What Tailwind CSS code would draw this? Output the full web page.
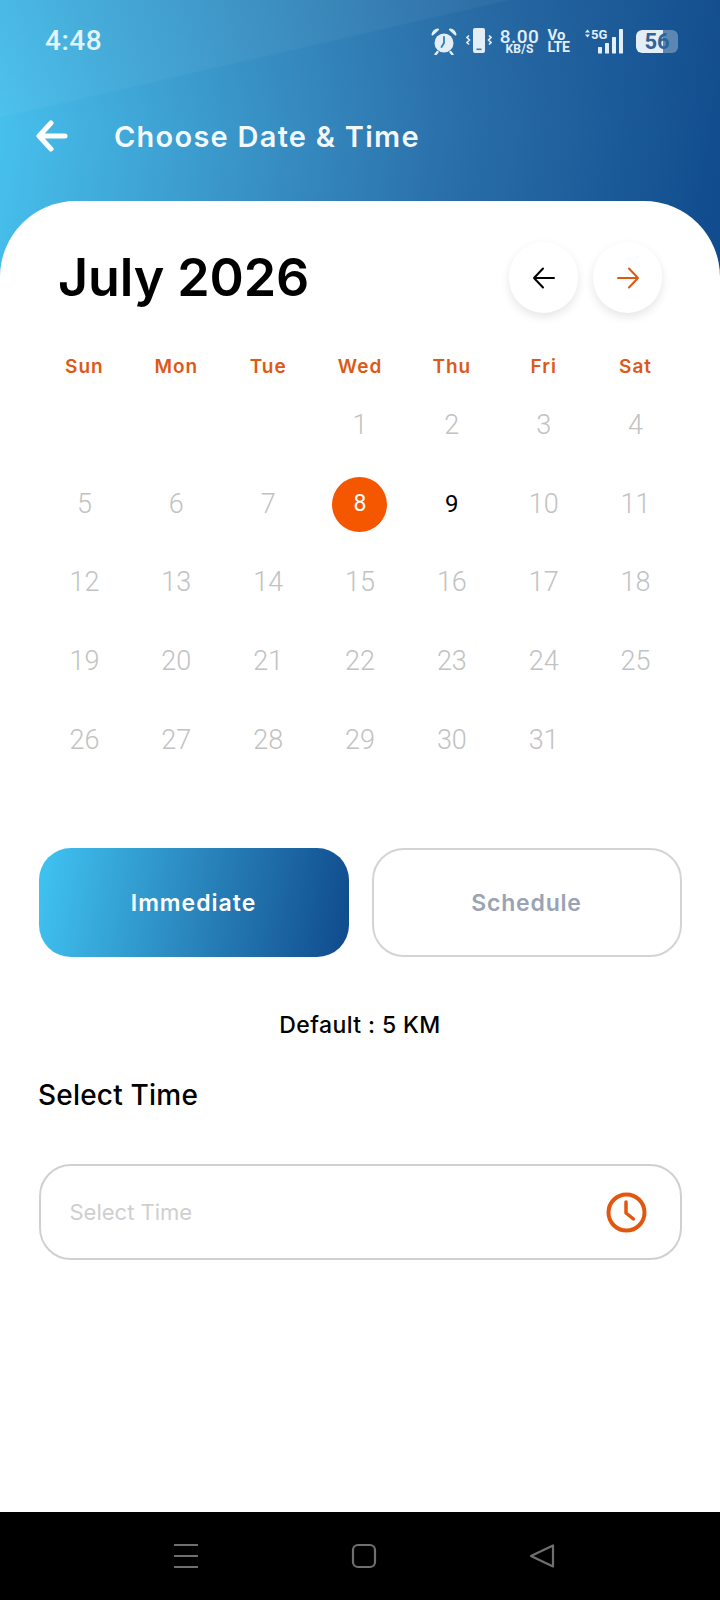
<!DOCTYPE html>
<html lang="en">
<head>
  <meta charset="UTF-8">
  <meta name="viewport" content="width=device-width, initial-scale=1.0">
  <title>Choose Date & Time</title>
  <script src="https://cdn.jsdelivr.net/npm/@tailwindcss/browser@4"></script>
</head>
<body class="bg-white font-['Inter',sans-serif]">
  <div class="w-[720px] h-[1600px] flex flex-col overflow-hidden bg-no-repeat bg-[length:100%_290px] bg-[linear-gradient(167deg,rgba(255,255,255,0.04)_0%,rgba(255,255,255,0.04)_25.500%,rgba(255,255,255,0)_26%),linear-gradient(180deg,rgba(20,60,120,0.1)_0%,rgba(20,60,120,0)_45%),linear-gradient(100deg,#48c4f0_0%,#3a96c9_33%,#2a6fa9_62%,#0f4a8c_100%)]">

    <!-- status bar -->
    <div class="h-[82px] shrink-0 flex items-center justify-between pl-[45px] pr-[42px] text-white/85">
      <span class="text-[28px] font-medium font-['Roboto',sans-serif] tracking-[0.5px]">4:48</span>
      <div class="flex items-center h-[30px]">
        <svg class="w-[26px] h-[27px]" viewBox="0 0 26 27" fill="none">
          <circle cx="13" cy="15" r="9.500" fill="#e3eef6"/>
          <path d="M13 9v6l-2.500 4" stroke="#2f7fb6" stroke-width="1.800" stroke-linecap="round" fill="none"/>
          <path d="M1.500 6.500Q2.500 2 7 1.500ZM24.500 6.500Q23.500 2 19 1.500Z" fill="#e3eef6" stroke="#e3eef6" stroke-width="2" stroke-linejoin="round"/>
          <path d="M6.500 24l-2 2.500M19.500 24l2 2.500" stroke="#e3eef6" stroke-width="2.400" stroke-linecap="round"/>
        </svg>
        <svg class="w-[26px] h-[26px] ml-[9px]" viewBox="0 0 26 26" fill="none">
          <rect x="7" y="0" width="12" height="25" rx="2" fill="#e3eef6"/>
          <rect x="10.500" y="20.500" width="5" height="1.600" fill="#2f7fb6"/>
          <path d="M3 7.500 1 9.500l2.500 2.500L1 14.500l2 2M23 7.500l2 2-2.500 2.500 2.500 2.500-2 2" stroke="#e3eef6" stroke-width="1.600"/>
        </svg>
        <div class="ml-[8px] flex flex-col items-center font-['Roboto',sans-serif] font-medium leading-none text-[#e3eef6]">
          <span class="text-[19px] tracking-[0.5px] h-[15px] leading-[15px]">8.00</span>
          <span class="text-[12px] font-bold h-[10px] leading-[10px] tracking-[0.3px]">KB/S</span>
        </div>
        <div class="ml-[8px] flex flex-col items-start font-['Roboto',sans-serif] font-bold leading-none text-[#e3eef6]">
          <span class="text-[15px] h-[13px] leading-[13px]">Vo</span>
          <span class="text-[14px] h-[11px] leading-[11px]">LTE</span>
        </div>
        <div class="relative ml-[14px] w-[44px] h-[26px] text-[#e3eef6]">
          <svg class="absolute left-0 top-0 w-[44px] h-[26px]" viewBox="0 0 44 26" fill="#e3eef6">
            <path d="M1 4.500 3.500 1.500 6 4.500zM1 6.500 3.500 9.500 6 6.500z"/>
            <rect x="14" y="19" width="4" height="6.500" rx="0.500"/>
            <rect x="21" y="15" width="4" height="10.500" rx="0.500"/>
            <rect x="28" y="9" width="4" height="16.500" rx="0.500"/>
            <rect x="35" y="1" width="4" height="24.500" rx="0.500"/>
          </svg>
          <span class="absolute left-[7px] top-[1px] text-[13px] font-bold font-['Roboto',sans-serif] leading-[11px]">5G</span>
        </div>
        <div class="relative ml-[8px] w-[42px] h-[23px] rounded-[6px] bg-white/30 overflow-hidden">
          <div class="w-[27px] h-full bg-[#e3eef6] rounded-l-[6px]"></div>
          <span class="absolute inset-0 flex items-center justify-center text-[22px] font-bold font-['Roboto',sans-serif] text-[#2d6499]">56</span>
        </div>
      </div>
    </div>

    <!-- title bar -->
    <div class="h-[119px] shrink-0 flex items-start pl-[36px]">
      <svg class="w-[32px] h-[32px] mt-[38px]" viewBox="0 0 32 32" fill="none" stroke="white" stroke-width="5" stroke-linecap="round" stroke-linejoin="round">
        <path d="M29 16H4M15 3 3 16l12 13"/>
      </svg>
      <h1 class="ml-[46px] mt-[37px] text-[29px] leading-[36px] font-semibold tracking-[1.250px] text-white/95">Choose Date &amp; Time</h1>
    </div>

    <!-- card -->
    <div class="flex-1 bg-white rounded-t-[76px] flex flex-col">
      <div class="flex items-center justify-between pl-[58px] pr-[58px] pt-[41px]">
        <h2 class="text-[52px] leading-[70px] font-semibold tracking-[-0.1px] text-black">July 2026</h2>
        <div class="flex gap-[15px]">
          <button class="w-[69px] h-[71px] rounded-full bg-white shadow-[0_4px_10px_rgba(0,0,0,0.1)] flex items-center justify-center">
            <svg class="w-[24px] h-[24px]" viewBox="0 0 24 24" fill="none" stroke="#000" stroke-width="2" stroke-linecap="round" stroke-linejoin="round"><path d="M22 12H2M11 2.500 2 12l9 9.500"/></svg>
          </button>
          <button class="w-[69px] h-[71px] rounded-full bg-white shadow-[0_4px_10px_rgba(0,0,0,0.1)] flex items-center justify-center">
            <svg class="w-[24px] h-[24px]" viewBox="0 0 24 24" fill="none" stroke="#e2570f" stroke-width="2" stroke-linecap="round" stroke-linejoin="round"><path d="M2 12h20M13 2.500l9 9.500-9 9.500"/></svg>
          </button>
        </div>
      </div>

      <!-- calendar -->
      <div class="mt-[40px] px-[38.500px] grid grid-cols-7 w-full text-center">
        <div class="h-[28px] leading-[28px] text-[19px] font-semibold tracking-[1px] text-[#dd5a16]">Sun</div>
        <div class="h-[28px] leading-[28px] text-[19px] font-semibold tracking-[1px] text-[#dd5a16]">Mon</div>
        <div class="h-[28px] leading-[28px] text-[19px] font-semibold tracking-[1px] text-[#dd5a16]">Tue</div>
        <div class="h-[28px] leading-[28px] text-[19px] font-semibold tracking-[1px] text-[#dd5a16]">Wed</div>
        <div class="h-[28px] leading-[28px] text-[19px] font-semibold tracking-[1px] text-[#dd5a16]">Thu</div>
        <div class="h-[28px] leading-[28px] text-[19px] font-semibold tracking-[1px] text-[#dd5a16]">Fri</div>
        <div class="h-[28px] leading-[28px] text-[19px] font-semibold tracking-[1px] text-[#dd5a16]">Sat</div>
      </div>
      <div class="mt-[5px] px-[38.500px] grid grid-cols-7 auto-rows-[78.700px] w-full font-['Roboto',sans-serif] font-light text-[27px] text-[#c2c2c2]">
        <div></div><div></div><div></div>
        <div class="flex items-center justify-center">1</div>
        <div class="flex items-center justify-center">2</div>
        <div class="flex items-center justify-center">3</div>
        <div class="flex items-center justify-center">4</div>
        <div class="flex items-center justify-center">5</div>
        <div class="flex items-center justify-center">6</div>
        <div class="flex items-center justify-center">7</div>
        <div class="flex items-center justify-center"><span class="w-[55px] h-[55px] rounded-full bg-[#f55600] text-white font-normal text-[23px] flex items-center justify-center">8</span></div>
        <div class="flex items-center justify-center text-black font-normal text-[24px]">9</div>
        <div class="flex items-center justify-center">10</div>
        <div class="flex items-center justify-center">11</div>
        <div class="flex items-center justify-center">12</div>
        <div class="flex items-center justify-center">13</div>
        <div class="flex items-center justify-center">14</div>
        <div class="flex items-center justify-center">15</div>
        <div class="flex items-center justify-center">16</div>
        <div class="flex items-center justify-center">17</div>
        <div class="flex items-center justify-center">18</div>
        <div class="flex items-center justify-center">19</div>
        <div class="flex items-center justify-center">20</div>
        <div class="flex items-center justify-center">21</div>
        <div class="flex items-center justify-center">22</div>
        <div class="flex items-center justify-center">23</div>
        <div class="flex items-center justify-center">24</div>
        <div class="flex items-center justify-center">25</div>
        <div class="flex items-center justify-center">26</div>
        <div class="flex items-center justify-center">27</div>
        <div class="flex items-center justify-center">28</div>
        <div class="flex items-center justify-center">29</div>
        <div class="flex items-center justify-center">30</div>
        <div class="flex items-center justify-center">31</div>
      </div>

      <!-- mode buttons -->
      <div class="mt-[69px] px-[38.500px] flex gap-[23px]">
        <button class="w-[310px] h-[109px] rounded-[32px] bg-[linear-gradient(100deg,#40c4f2_0%,#2a86bd_50%,#0f4a8c_100%)] text-white text-[23px] font-semibold tracking-[1px]">Immediate</button>
        <button class="w-[310px] h-[109px] rounded-[32px] border-2 border-[#d4d4d4] text-[#9aa3b5] text-[23px] font-semibold tracking-[0.8px]">Schedule</button>
      </div>

      <p class="mt-[52px] text-center text-[23px] leading-[32px] font-medium tracking-[0.4px] text-black">Default : 5 KM</p>

      <h3 class="mt-[34px] pl-[38px] text-[28px] leading-[40px] font-medium tracking-[0.2px] text-black">Select Time</h3>

      <div class="mt-[49px] mx-[38.500px] h-[96px] rounded-[32px] border-2 border-[#d0d0d0] flex items-center justify-between pl-[29px] pr-[33px]">
        <span class="text-[22px] text-[#cfcfcf]">Select Time</span>
        <svg class="w-[41px] h-[41px]" viewBox="0 0 41 41" fill="none" stroke="#e2570f" stroke-width="4" stroke-linecap="round" stroke-linejoin="round">
          <circle cx="20.500" cy="20.500" r="18"/>
          <path d="M20 10v11l7.500 6" stroke-width="3.500"/>
        </svg>
      </div>

      <div class="flex-1"></div>

      <!-- android nav -->
      <div class="h-[88px] shrink-0 bg-black flex items-start justify-center">
        <div class="w-[382px] flex items-center justify-between mt-[31px] ml-[7px]">
          <svg class="w-[26px] h-[26px]" viewBox="0 0 26 26" stroke="#6f6f6f" stroke-width="2"><path d="M1 2h24M1 13h24M1 24h24"/></svg>
          <svg class="w-[26px] h-[26px]" viewBox="0 0 26 26" fill="none" stroke="#6f6f6f" stroke-width="2.200"><rect x="2" y="2" width="22" height="22" rx="5"/></svg>
          <svg class="w-[26px] h-[26px]" viewBox="0 0 26 26" fill="none" stroke="#6f6f6f" stroke-width="2.200" stroke-linejoin="round"><path d="M24 2.500v21L2 13z"/></svg>
        </div>
      </div>
    </div>
  </div>
</body>
</html>
